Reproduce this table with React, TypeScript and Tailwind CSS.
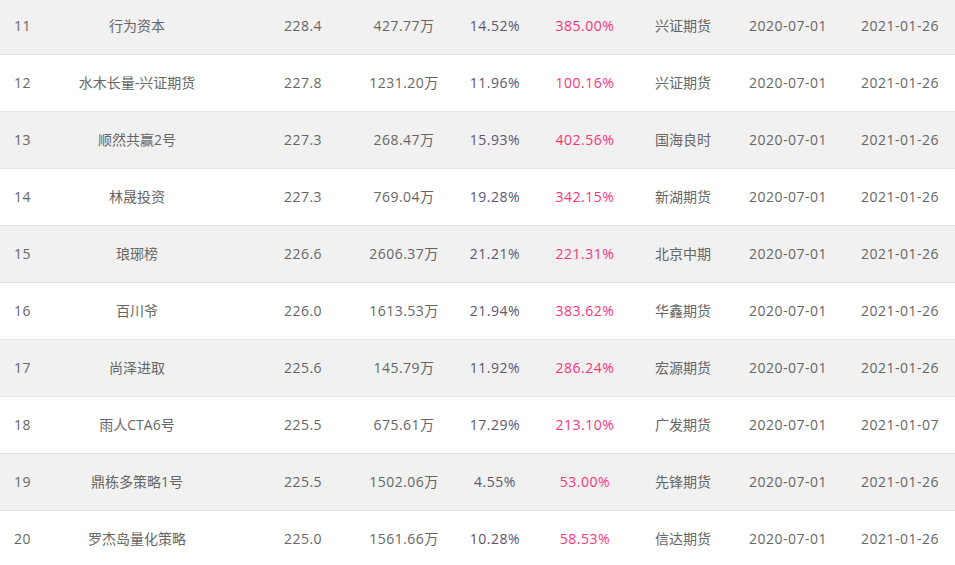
import React from "react";

const rows = [
  ["11", "行为资本", "228.4", "427.77万", "14.52%", "385.00%", "兴证期货", "2020-07-01", "2021-01-26"],
  ["12", "水木长量-兴证期货", "227.8", "1231.20万", "11.96%", "100.16%", "兴证期货", "2020-07-01", "2021-01-26"],
  ["13", "顺然共赢2号", "227.3", "268.47万", "15.93%", "402.56%", "国海良时", "2020-07-01", "2021-01-26"],
  ["14", "林晟投资", "227.3", "769.04万", "19.28%", "342.15%", "新湖期货", "2020-07-01", "2021-01-26"],
  ["15", "琅琊榜", "226.6", "2606.37万", "21.21%", "221.31%", "北京中期", "2020-07-01", "2021-01-26"],
  ["16", "百川爷", "226.0", "1613.53万", "21.94%", "383.62%", "华鑫期货", "2020-07-01", "2021-01-26"],
  ["17", "尚泽进取", "225.6", "145.79万", "11.92%", "286.24%", "宏源期货", "2020-07-01", "2021-01-26"],
  ["18", "雨人CTA6号", "225.5", "675.61万", "17.29%", "213.10%", "广发期货", "2020-07-01", "2021-01-07"],
  ["19", "鼎栋多策略1号", "225.5", "1502.06万", "4.55%", "53.00%", "先锋期货", "2020-07-01", "2021-01-26"],
  ["20", "罗杰岛量化策略", "225.0", "1561.66万", "10.28%", "58.53%", "信达期货", "2020-07-01", "2021-01-26"],
];

export default function App() {
  return (
    <div
      className="w-[955px] h-[565px] overflow-hidden bg-white text-[14px] text-[#666]"
      style={{ fontFamily: '"Open Sans", "Noto Sans CJK SC", sans-serif' }}
    >
      <div className="mt-[-2px] flex flex-col">
        {rows.map((r, i) => (
          <div
            key={r[0]}
            className={`flex items-center h-[57px] pb-[2px] border-b border-[#e1e1e8] ${
              i % 2 === 0 ? "bg-[#f1f1f1]" : "bg-white"
            }`}
          >
            <div className="w-[62px] pl-[14px] tracking-[0.5px]">{r[0]}</div>
            <div className="w-[150px] text-center whitespace-nowrap">{r[1]}</div>
            <div className="ml-[46px] w-[90px] text-center tracking-[0.5px]">{r[2]}</div>
            <div className="ml-[11px] w-[90px] text-center whitespace-nowrap tracking-[0.5px]">{r[3]}</div>
            <div className="ml-[1px] w-[90px] text-center text-[#5e5470] tracking-[0.5px]">{r[4]}</div>
            <div className="w-[90px] text-center text-[#ff3377] tracking-[0.5px]">{r[5]}</div>
            <div className="ml-[8px] w-[90px] text-center">{r[6]}</div>
            <div className="ml-[10px] w-[100px] text-center tracking-[0.5px]">{r[7]}</div>
            <div className="ml-[12px] w-[100px] text-center tracking-[0.5px]">{r[8]}</div>
          </div>
        ))}
      </div>
    </div>
  );
}
